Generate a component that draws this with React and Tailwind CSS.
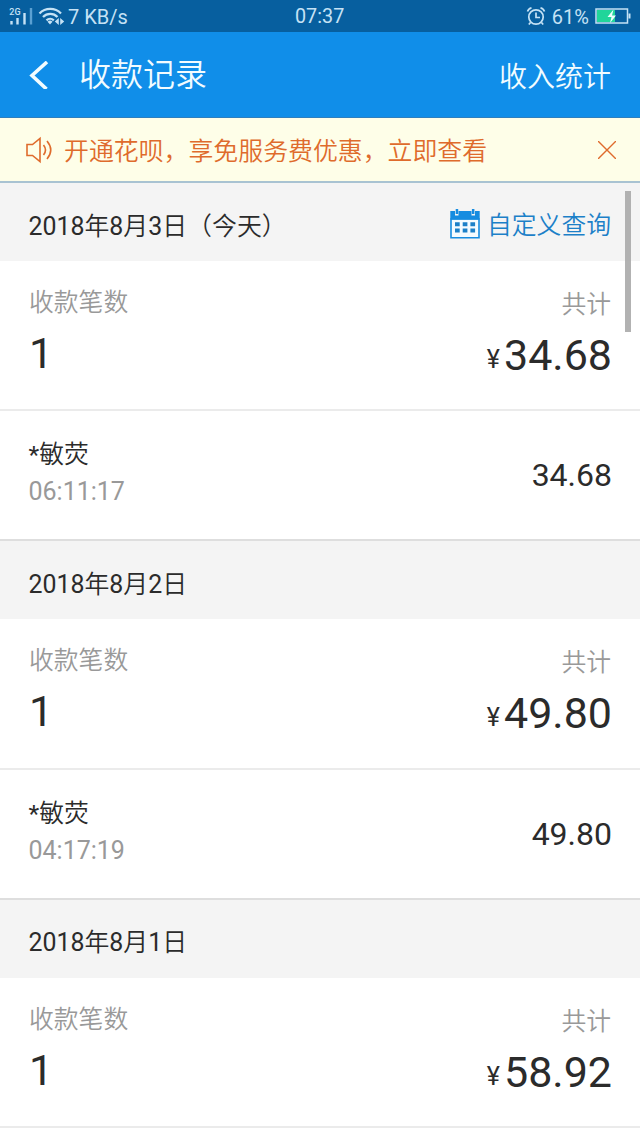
const days = [
  { date: '2018年8月3日（今天）', count: '1', total: '34.68', time: '06:11:17', query: true },
  { date: '2018年8月2日', count: '1', total: '49.80', time: '04:17:19' },
  { date: '2018年8月1日', count: '1', total: '58.92' },
];

function StatusBar() {
  return (
    <div className="flex h-8 items-center bg-[#075f9f] pl-[9px] pr-[9px] text-[19px] leading-8 text-[#c5e2f5]">
      <svg className="h-8 w-[56px] shrink-0" viewBox="9 0 56 32" fill="none">
        <text x="9.3" y="14.8" fontSize="9" fontWeight="500" fill="#c5e2f5">2G</text>
        <path d="M11.500 21v3.500M17.500 18v6.500M24.500 13v11.500" stroke="#c5e2f5" strokeWidth="2.400" />
        <path d="M31 8v16.500" stroke="#5ba0d2" strokeWidth="2.400" />
        <path d="M39.500 13.500a15 15 0 0 1 21.500 0M43 17a10 10 0 0 1 14.500 0M46.500 20.300a5.400 5.400 0 0 1 7.300 0" stroke="#c5e2f5" strokeWidth="2.300" />
        <path d="M47.500 21.700a3.700 3.700 0 0 1 5 0L50 24.400z" fill="#c5e2f5" />
        <path d="M58.800 18v7l-4-3.500zM60.200 18v7l4-3.500z" fill="#c5e2f5" />
      </svg>
      <span className="ml-[3px] w-[227px] pt-[2px] text-[20px]">7 KB/s</span>
      <span className="pt-[2px] text-[19.800px]">07:37</span>
      <div className="ml-auto flex items-center">
        <svg className="h-5 w-5" viewBox="0 0 20 20" fill="none" stroke="#c5e2f5" strokeWidth="1.700">
          <circle cx="10" cy="11" r="7.200" />
          <path d="M10 6.500V11.500h4M1.500 5.500Q2.500 2.500 5.500 1.800M18.500 5.500Q17.500 2.500 14.500 1.800M4.500 16.500l-1.700 2M15.500 16.500l1.700 2" />
        </svg>
        <span className="ml-[6px] mr-[6px] pt-[2px] text-[20px]">61%</span>
        <svg className="h-4 w-9" viewBox="0 0 36 16">
          <path d="M2 2h18v12H2z" fill="#20d59a" />
          <path d="M1 1h31.500v14H1z" fill="none" stroke="#c5e2f5" strokeWidth="1.500" />
          <path d="M33.500 5.500h2v5h-2z" fill="#c5e2f5" />
          <path d="M18.500 1.500l-6 7.500h4l-1.500 6 6-7.500h-4z" fill="#eaffff" />
        </svg>
      </div>
    </div>
  );
}

function CalendarIcon() {
  return (
    <svg className="mt-[3px] h-[30px] w-[30px]" viewBox="0 0 30 30" fill="none">
      <path d="M1 10h28v18.800H1z" fill="#f4fbff" stroke="#168ce0" strokeWidth="1.600" />
      <path d="M0.300 2H5v4.500h3.500V2h13v4.500H25V2h4.700v8.500H0.300z" fill="#168ce0" />
      <path d="M5.700 0h2.500v5H5.700zM21.900 0h2.500v5h-2.500z" fill="#168ce0" />
      <path d="M5 13.200h4.700v4H5zM12.700 13.200h4.700v4h-4.700zM20.400 13.200h4.700v4h-4.700zM5 19.600h4.700v4H5zM12.700 19.600h4.700v4h-4.700zM20.400 19.600h4.700v4h-4.700z" fill="#1c80c8" />
    </svg>
  );
}

function Day({ day }) {
  return (
    <section>
      <div className="flex h-[78px] items-center justify-between bg-[#f4f4f4] pl-[28.500px] pr-[29px]">
        <h2 className="mt-[9px] text-[24.900px]">{day.date}</h2>
        {day.query && (
          <button className="flex items-center gap-[7px] text-[24.800px] text-[#1c80c8]">
            <CalendarIcon />
            <span className="mt-[8px]">自定义查询</span>
          </button>
        )}
      </div>
      <div className="flex h-[150.300px] justify-between border-b-2 border-[#ebebeb] pl-[29px] pr-[29px] pt-[24px]">
        <div>
          <div className="text-[24.800px] leading-[36px] text-[#999]">收款笔数</div>
          <div className="mt-[6px] text-[43px] leading-[52px]">{day.count}</div>
        </div>
        <div className="flex flex-col items-end">
          <div className="mt-[2px] text-[24.800px] leading-[36px] text-[#999]">共计</div>
          <div className="mt-[6px] flex items-baseline text-[43px] leading-[52px]">
            <span className="relative -top-[2px] mr-[4px] text-[25px]">¥</span>
            <span className="-mr-px">{day.total}</span>
          </div>
        </div>
      </div>
      {day.time && (
        <div className="flex h-[130px] justify-between border-b-2 border-[#dedede] pl-[28.500px] pr-[28px] pt-[26px]">
          <div>
            <div className="text-[24.800px] leading-[36px]">*敏荧</div>
            <div className="mt-px text-[25px] leading-[36px] text-[#999]">{day.time}</div>
          </div>
          <div className="pt-[16px] text-[32px] leading-[44px]">{day.total}</div>
        </div>
      )}
    </section>
  );
}

export default function App() {
  return (
    <div
      lang="zh-CN"
      className="relative h-[1138px] w-[640px] overflow-hidden bg-white font-['Roboto','Noto_Sans_CJK_SC_DemiLight','Noto_Sans_CJK_SC',sans-serif] font-normal text-[#2b2b2b]"
    >
      <StatusBar />
      <header className="flex h-[86px] items-center border-b border-[#2f7fbe] bg-[#108ee9] pl-[29px] pr-[29px] text-[#f2fcff]">
        <svg className="h-7 w-5" viewBox="0 0 20 28" fill="none">
          <path d="M18 1L3 14.500 17.500 28" stroke="#f2fcff" strokeWidth="3.600" />
        </svg>
        <h1 className="ml-[30px] text-[32px]">收款记录</h1>
        <span className="ml-auto pt-[7px] text-[28px]">收入统计</span>
      </header>
      <div className="flex h-[65px] items-center border-b-2 border-[#a9c3d2] bg-[#fefee8] pl-[26px] pr-[24px] text-[24.900px] text-[#df6b2c]">
        <svg className="h-7 w-7" viewBox="0 0 28 28" fill="none" stroke="#df6b2c" strokeWidth="1.600">
          <path d="M1 8.500h5.500L14 2.500v23l-7.500-6H1zM17.500 9q4 5 0 10M21 5q7.500 9 0 18" />
        </svg>
        <span className="ml-[10px] whitespace-nowrap pt-[5px]">开通花呗，享免服务费优惠，立即查看</span>
        <svg className="ml-auto h-[18px] w-[18px]" viewBox="0 0 18 18" stroke="#df6b2c" strokeWidth="1.400">
          <path d="M0 0l18 18M18 0L0 18" />
        </svg>
      </div>
      <main>
        {days.map((day) => (
          <Day key={day.date} day={day} />
        ))}
      </main>
      <div className="absolute left-[625px] top-[191px] h-[141px] w-[6px] bg-[#aaa]/90" />
    </div>
  );
}
